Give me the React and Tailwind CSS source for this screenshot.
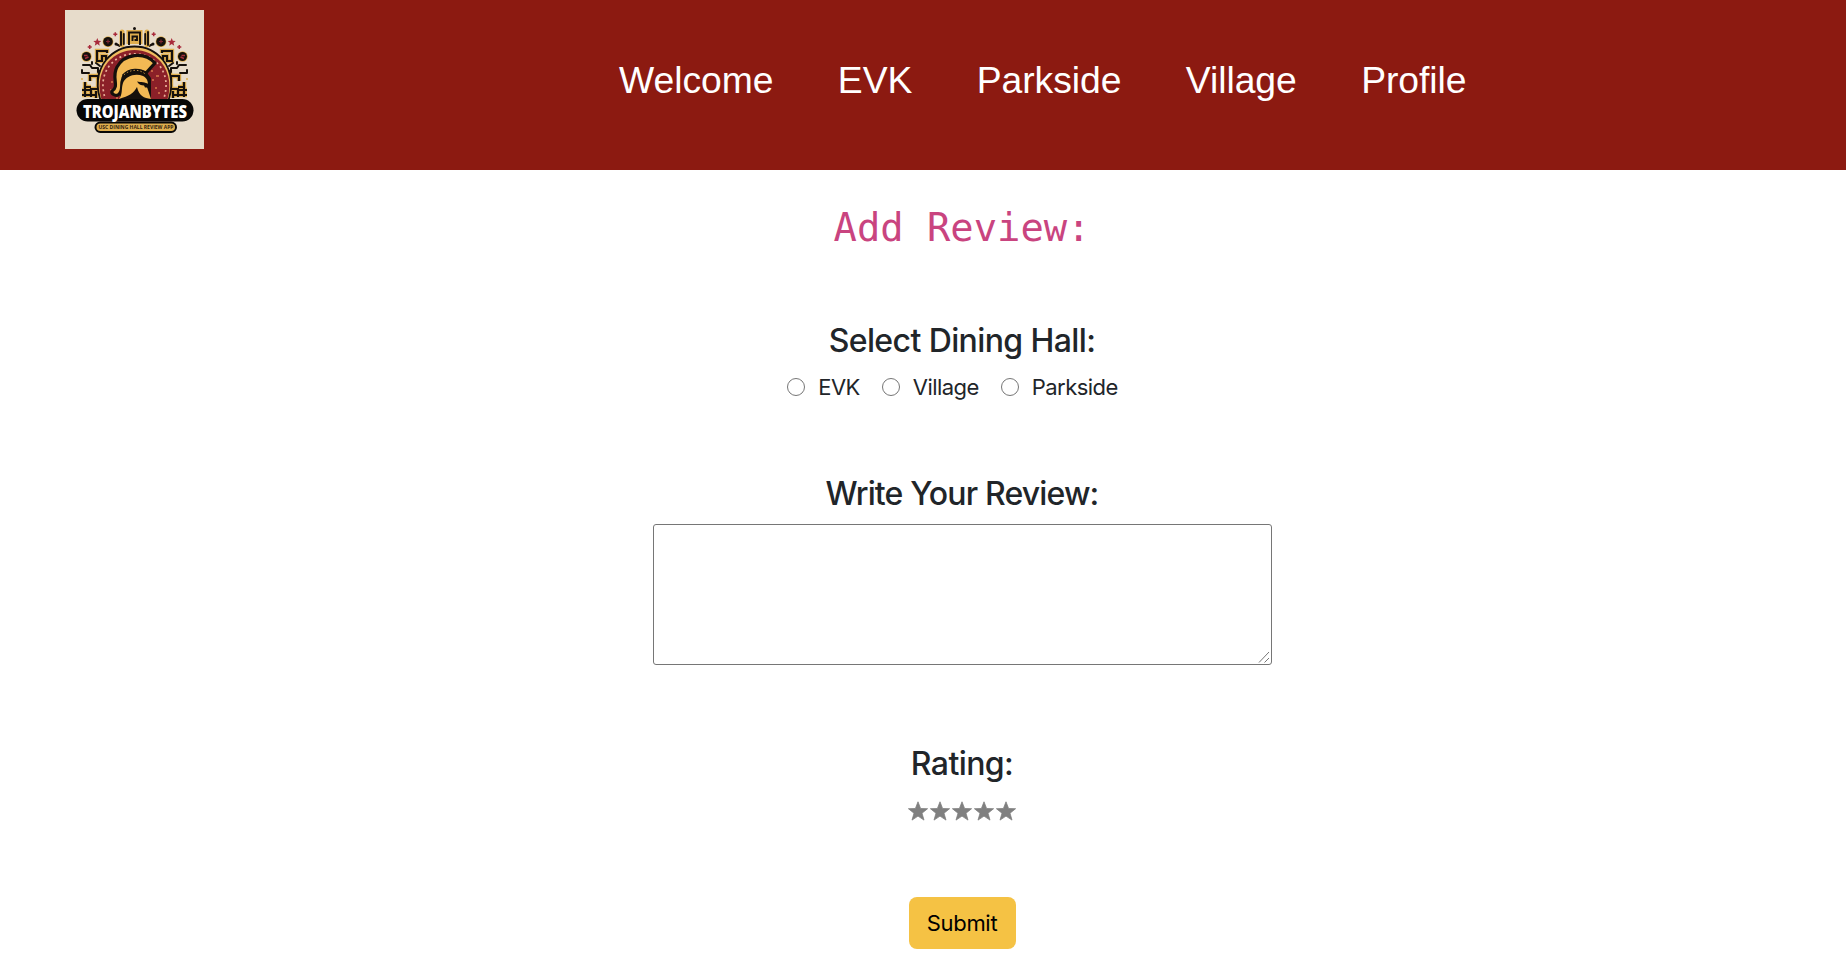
import React from "react";

const nav = ["Welcome", "EVK", "Parkside", "Village", "Profile"];
const halls = ["EVK", "Village", "Parkside"];

const maze = "M41 50v-4h-4v5h-5V41h10v2M25 71v-5h8v13h-7v8M20 72v5h6M34 66v-6M17 80h10M17 85h15M20 78v9M31 81v7";

function Ornaments() {
  return (
    <g>
      <path d={maze} fill="none" stroke="#dfae4e" strokeWidth="4.4" />
      <path d={maze} fill="none" stroke="#15100c" strokeWidth="2.2" />
      <g fill="none" stroke="#15100c" strokeWidth="2" strokeLinecap="round" strokeLinejoin="round">
        <path d="M18 55h7l2 3h6v4M17 60v3h7M31 53l4 3M51 34l4 2M27 52v2" />
      </g>
      <circle cx="17" cy="69" r="1" fill="#dfae4e" />
      <circle cx="51" cy="34" r="1.5" fill="#15100c" />
      <circle cx="21.500" cy="46.500" r="5.200" fill="#dfae4e" />
      <circle cx="21.500" cy="46.500" r="4.500" fill="#15100c" />
      <path d="M19 45.500h3.500M20 48.500l3.500-1.500" stroke="#a5303b" strokeWidth="1.500" />
      <circle cx="43" cy="31.700" r="5.400" fill="#dfae4e" />
      <circle cx="43" cy="31.700" r="4.800" fill="#15100c" />
      <path d="M41 31.500h4M43 29.500v4" stroke="#7e2530" strokeWidth="1.200" />
      <path d="m32.300 28 1.100 2.700 2.900.2-2.200 1.900.7 2.900-2.500-1.600-2.500 1.600.7-2.900-2.200-1.900 2.900-.2z" fill="#a92b3b" />
      <path d="M48.300 24.300h4M50.300 22.300v4M22.700 37h4M24.700 35v4" stroke="#a92b3b" strokeWidth="1.500" />
      <path d="M57 22v13" stroke="#dfae4e" strokeWidth="5" strokeLinecap="round" />
      <path d="M56 22v13M58.800 24v10" stroke="#15100c" strokeWidth="1.900" strokeLinecap="round" />
    </g>
  );
}

function Logo() {
  return (
    <svg viewBox="0 0 139 139" className="size-[139px] shrink-0 overflow-visible">
      <rect width="139" height="139" fill="#e7dccb" />
      <Ornaments />
      <g transform="translate(139 0) scale(-1 1)"><Ornaments /></g>
      <path d="M63.500 34V22h12v12" fill="#dfae4e" stroke="#dfae4e" strokeWidth="4" />
      <path d="M64 35V22.500h11V35M67.500 31v-4.500h4.500V30h-2.500" fill="none" stroke="#15100c" strokeWidth="1.900" />
      <circle cx="69.500" cy="18.500" r="1.500" fill="#15100c" />
      <path d="M37 94C30 78 32 61 41 50 56 32 83 32 98 50c9 11 11 28 4 44z" fill="#efbd5f" stroke="#15100c" strokeWidth="1.800" />
      <path d="M38 94C32 78 34 63 43 52 57 36 82 36 96 52c9 11 11 26 5 42z" fill="#8b2028" />
      <path d="M41 91C36 77 37 65 45 55 58 40 81 40 94 55c8 10 9 22 4 36" fill="none" stroke="#eab09a" strokeWidth="1.700" strokeDasharray="2 3" />
      <path d="M87 70h2M91 66h3M90 78h2M93 83h2M86 61h2M46 72h2M45 80h2M51 88h2" stroke="#c46342" strokeWidth="2.200" />
      <path d="M55 90V70l8-10 17 0 6 8v22z" fill="#15100c" />
      <path d="M47 81c8-5-1-13 5-24 7-13 27-16 38-4l-9 10c-8-4-20-2-23 5-3 8 1 13-5 17-3 1-7-1-6-4z" fill="#f3b954" stroke="#15100c" strokeWidth="3.200" strokeLinejoin="round" />
      <path d="M54 89c4-5 2-10 4-16 3-7 12-10 20-7 4 2 5 5 5 9l-1 2 4 12c-7-1-12-3-14-12-3 6-8 9-18 12z" fill="#f3b954" />
      <path d="M58 66c6-7 17-8 24-1" fill="none" stroke="#15100c" strokeWidth="3" />
      <path d="M59 64.800c6-5.500 15-6 21-1" fill="none" stroke="#e2a94d" strokeWidth=".8" strokeDasharray="1.500 2" />
      <path d="M72 71.500c4 1 8 0 12 3l-1 3h-3l-1-2c-3 0-5-1-7-4z" fill="#15100c" />
      <rect x="11.500" y="89" width="117" height="22.500" rx="11.250" fill="#080706" />
      <rect x="30.500" y="112.500" width="80.500" height="9.500" rx="4.750" fill="#dfae4e" stroke="#080706" strokeWidth="2" />
      <text x="18" y="107.500" textLength="104" lengthAdjust="spacingAndGlyphs" fill="#fff" className="font-['Open_Sans',sans-serif] text-[17.500px] font-extrabold">TROJANBYTES</text>
      <text x="33.500" y="119" textLength="75" lengthAdjust="spacingAndGlyphs" fill="#33230f" className="font-['Open_Sans',sans-serif] text-[4.800px] font-bold">USC DINING HALL REVIEW APP</text>
    </svg>
  );
}

const heading = "text-[32px] leading-[38px] font-medium";

export default function App() {
  return (
    <div className="h-[976px] w-[1846px] overflow-hidden bg-white font-[Inter,sans-serif] text-[#212529]">
      <header className="flex h-[170px] items-start bg-[#8c1a11] pt-[10px] pl-[65px]">
        <Logo />
        <nav className="mt-[48px] ml-[415px] flex gap-[64.400px] font-['Liberation_Sans',Arial,sans-serif] text-[37.300px] leading-[44px] tracking-[-0.050px] text-white">
          {nav.map((item) => <a key={item} href="#">{item}</a>)}
        </nav>
      </header>
      <main className="ml-[78px] flex flex-col items-center">
        <h1 className="mt-[34px] font-['DejaVu_Sans_Mono',monospace] text-[38.800px] leading-[48px] text-[#c9447f]">Add Review:</h1>
        <h2 className={`mt-[70px] tracking-[-0.600px] ${heading}`}>Select Dining Hall:</h2>
        <div className="mt-[11px] mr-[19px] flex h-[32px] gap-[22px] text-[22px] leading-[32px] tracking-[-0.550px]">
          {halls.map((hall) => (
            <label key={hall} className="flex items-center">
              <input type="radio" name="hall" className="mr-[13px] size-[18px] appearance-none rounded-full border border-[#767676] bg-white" />
              {hall}
            </label>
          ))}
        </div>
        <h2 className={`mt-[72px] tracking-[-0.850px] ${heading}`}>Write Your Review:</h2>
        <div className="relative mt-[11px] h-[141px] w-[619px]">
          <textarea className="block size-full resize-none rounded-[3px] border border-[#767676] bg-white" />
          <svg viewBox="0 0 12 12" className="pointer-events-none absolute right-[2px] bottom-[2px] size-[12px] fill-none stroke-[#767676]">
            <path d="M1 11.500 11 1M6.500 11.500 11 7" />
          </svg>
        </div>
        <h2 className={`mt-[80px] tracking-[-0.600px] ${heading}`}>Rating:</h2>
        <div className="mt-[18px] flex gap-[2px]">
          {[1, 2, 3, 4, 5].map((n) => (
            <svg key={n} viewBox="0 0 20 20" className="size-[20px] fill-[#808080] stroke-[#808080] stroke-[.8]">
              <path strokeLinejoin="round" d="m10 .8 2.600 6.700 7 .2-5.600 4.500 2 6.900-6-4-6 4 2-6.900L.4 7.700l7-.2z" />
            </svg>
          ))}
        </div>
        <button className="mt-[76px] h-[52px] w-[107px] rounded-[8px] bg-[#f5c244] text-[22px] tracking-[-0.300px] text-black">Submit</button>
      </main>
    </div>
  );
}
